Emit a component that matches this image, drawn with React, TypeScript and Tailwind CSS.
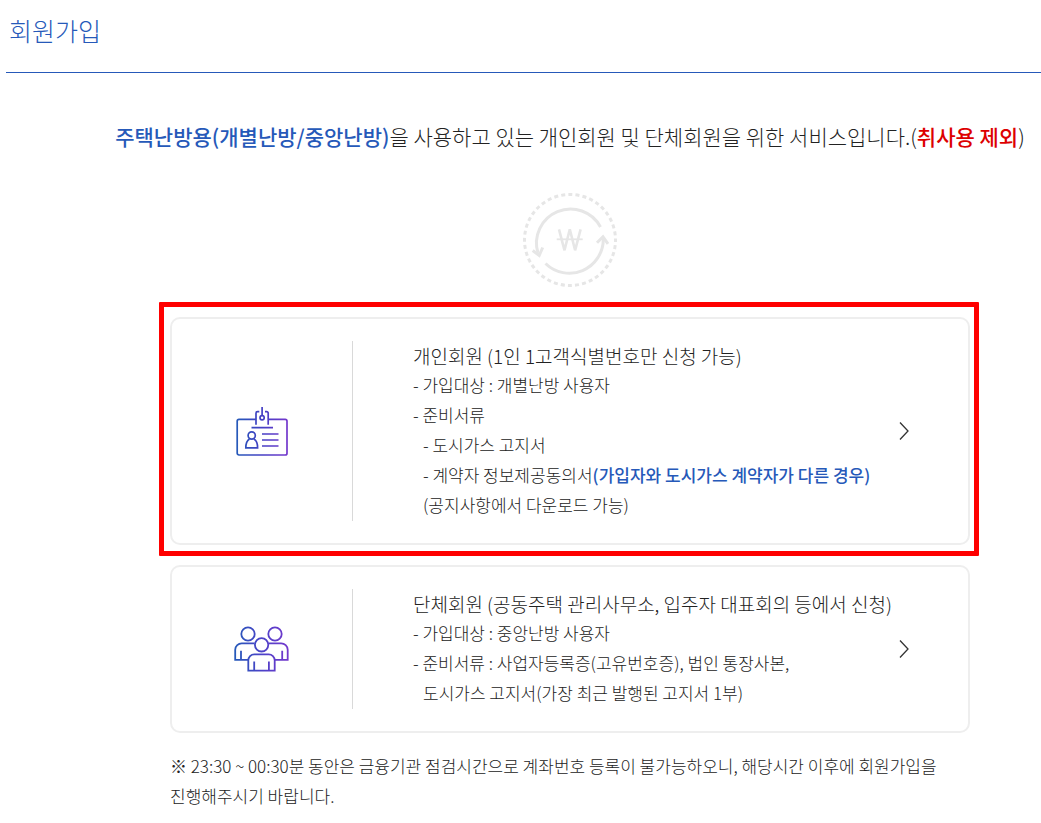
import type { ReactNode } from "react";

type MemberCardProps = {
  icon: ReactNode;
  title: string;
  highlighted?: boolean;
  children: ReactNode;
};

function WonCycleIcon() {
  return (
    <svg width="94" height="94" viewBox="0 0 94 94" fill="none" stroke="#e6e6e6" strokeWidth="3" aria-hidden="true">
      <circle cx="47" cy="47" r="45.5" strokeDasharray="4 3.147" strokeDashoffset="2" />
      <path d="M15 60A34 34 0 0 1 77.5 34" />
      <path d="M22.5 70.500A34 34 0 0 0 80.300 46" />
      <path d="M9.700 57.500l6.500 5 3.500-8" />
      <path d="M74 49.800l6-6 5 7" />
      <path d="M36 36.300l5.500 21 5.300-21 5.300 21 5.500-21" strokeWidth="2.600" strokeLinejoin="bevel" />
      <path d="M33.700 46.300h26" strokeWidth="1.800" />
    </svg>
  );
}

function IdCardIcon() {
  return (
    <svg width="54" height="52" viewBox="0 0 54 52" fill="none" stroke="url(#id-card)" strokeWidth="1.700" aria-hidden="true">
      <defs>
        <linearGradient id="id-card" gradientUnits="userSpaceOnUse" x1="2" y1="0" x2="52" y2="0">
          <stop offset="0" stopColor="#2659b9" />
          <stop offset="0.500" stopColor="#443fc4" />
          <stop offset="1" stopColor="#7338cc" />
        </linearGradient>
      </defs>
      <path d="M21 14.300H4a1.800 1.800 0 0 0-1.800 1.800v32.100A1.800 1.800 0 0 0 4 50h46.200a1.800 1.800 0 0 0 1.800-1.800V16.100a1.800 1.800 0 0 0-1.800-1.800H33.200" />
      <path d="M24.300 6.700h-1.800A1.500 1.500 0 0 0 21 8.200v11.500M30 6.700h1.700a1.500 1.500 0 0 1 1.500 1.500v11.500M16.500 22.700h21.500" />
      <path d="M27.100 2v8.500" />
      <circle cx="27.100" cy="12.700" r="2.100" />
      <circle cx="16.700" cy="30.500" r="3.600" />
      <path d="M14.500 34c-2.500 1.500-3.700 4-3.700 8.900h11.800c0-4.900-1.200-7.400-3.700-8.900M27 29h16.500M27 35h16.500M27 41h16.500" />
    </svg>
  );
}

function GroupIcon() {
  return (
    <svg width="56" height="46" viewBox="0 0 56 46" fill="none" stroke="url(#group)" strokeWidth="1.800" aria-hidden="true">
      <defs>
        <linearGradient id="group" gradientUnits="userSpaceOnUse" x1="1" y1="0" x2="54" y2="0">
          <stop offset="0" stopColor="#2659b9" />
          <stop offset="0.500" stopColor="#4b42c8" />
          <stop offset="1" stopColor="#7338cc" />
        </linearGradient>
      </defs>
      <circle cx="14" cy="8" r="6.700" />
      <circle cx="41" cy="8" r="6.700" />
      <circle cx="27.600" cy="18.800" r="6.700" />
      <path d="M20.500 17.400H8a6.500 6.500 0 0 0-6.800 6.400v10h13M7 33.800v-9M34.800 17.400H47a6.500 6.500 0 0 1 6.700 6.400v10h-13M48.200 33.800v-9" />
      <path d="M14.300 44.700V34.300a6 6 0 0 1 6-6h14.400a6 6 0 0 1 6 6v10.400zM20.200 44.700V35.500M34.900 44.700V35.500" />
    </svg>
  );
}

function MemberCard({ icon, title, highlighted, children }: MemberCardProps) {
  return (
    <div className="relative">
      <a href="#" className="flex items-center rounded-[10px] border-2 border-[#eeeeee] py-[22px] pr-[58px]">
        <span className="flex w-[180px] shrink-0 justify-center">{icon}</span>
        <div className="flex-1 border-l border-[#d9d9d9] pb-px pl-[60px] text-[17px] leading-[30px]">
          <h2 className="text-[19px] leading-[29px]">{title}</h2>
          {children}
        </div>
        <svg width="12" height="20" viewBox="0 0 12 20" fill="none" stroke="#333333" strokeWidth="1.300" aria-hidden="true">
          <path d="M2 1.500l8 8.500-8 8.500" />
        </svg>
      </a>
      {highlighted && (
        <div className="pointer-events-none absolute -top-[15px] -right-[9px] -bottom-[11px] -left-[11px] rounded-[1px] border-[5px] border-[#ff0000]" />
      )}
    </div>
  );
}

export default function App() {
  return (
    <div className="min-h-[823px] bg-white pl-[6px] font-['Noto_Sans_CJK_KR',sans-serif] font-light text-[#222222]">
      <header className="border-b border-[#2659b9] pt-[11px] pb-[23px] pl-[3px]">
        <h1 className="text-[25px] leading-[38px] text-[#2659b9]">회원가입</h1>
      </header>

      <main className="pl-[93px]">
        <p className="pt-[47px] text-center text-[21px] leading-8">
          <strong className="font-medium text-[#2659b9]">주택난방용(개별난방/중앙난방)</strong>을 사용하고 있는 개인회원 및 단체회원을 위한 서비스입니다.(
          <strong className="font-medium text-[#dd0000]">취사용 제외</strong>)
        </p>

        <div className="mx-auto mt-[41px] max-w-[800px]">
          <div className="flex justify-center">
            <WonCycleIcon />
          </div>

          <div className="mt-[30px] flex flex-col gap-5">
            <MemberCard icon={<IdCardIcon />} title="개인회원 (1인 1고객식별번호만 신청 가능)" highlighted>
              <ul>
                <li>- 가입대상 : 개별난방 사용자</li>
                <li>
                  - 준비서류
                  <ul className="pl-[10px]">
                    <li>- 도시가스 고지서</li>
                    <li>
                      - 계약자 정보제공동의서
                      <strong className="font-medium text-[#2659b9]">(가입자와 도시가스 계약자가 다른 경우)</strong>
                    </li>
                    <li>(공지사항에서 다운로드 가능)</li>
                  </ul>
                </li>
              </ul>
            </MemberCard>

            <MemberCard icon={<GroupIcon />} title="단체회원 (공동주택 관리사무소, 입주자 대표회의 등에서 신청)">
              <ul>
                <li>- 가입대상 : 중앙난방 사용자</li>
                <li>
                  - 준비서류 : 사업자등록증(고유번호증), 법인 통장사본,
                  <p className="pl-[10px]">도시가스 고지서(가장 최근 발행된 고지서 1부)</p>
                </li>
              </ul>
            </MemberCard>
          </div>

          <p className="pt-[18px] text-[17px] leading-[30px] break-keep">
            ※ 23:30 ~ 00:30분 동안은 금융기관 점검시간으로 계좌번호 등록이 불가능하오니, 해당시간 이후에 회원가입을 진행해주시기 바랍니다.
          </p>
        </div>
      </main>
    </div>
  );
}
